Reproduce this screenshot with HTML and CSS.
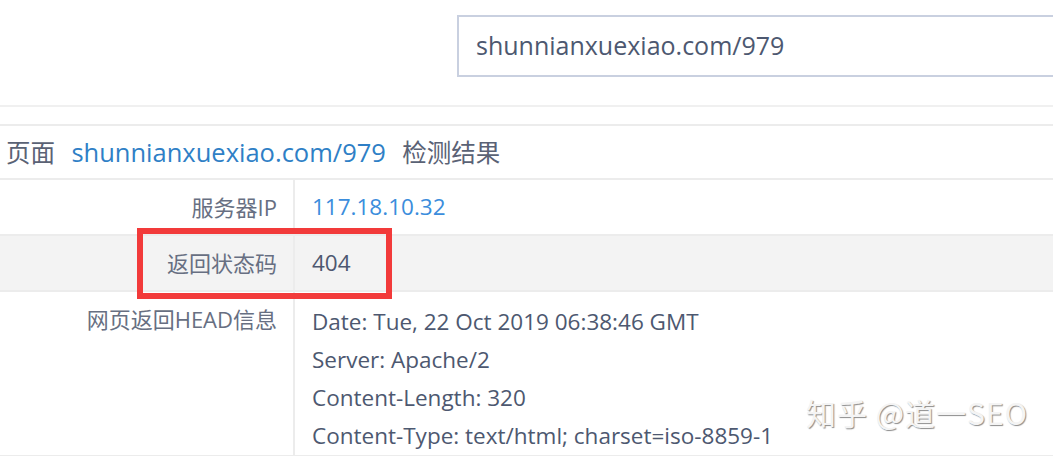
FILE: index.html
```html
<!DOCTYPE html>
<html lang="zh-CN">
<head>
    <meta charset="UTF-8">
    <title>页面检测结果</title>
    <link rel="stylesheet" href="styles.css">
</head>
<body>
    <div class="search-bar">
        <div class="search-input">shunnianxuexiao.com/979</div>
    </div>
    <div class="result">
        <div class="result-title">页面 <a class="link" href="#">shunnianxuexiao.com/979</a> 检测结果</div>
        <div class="row">
            <div class="label">服务器IP</div>
            <div class="value ip">117.18.10.32</div>
        </div>
        <div class="row gray">
            <div class="label">返回状态码</div>
            <div class="value">404</div>
            <div class="highlight"></div>
        </div>
        <div class="row">
            <div class="label">网页返回HEAD信息</div>
            <div class="value head">
                <div>Date: Tue, 22 Oct 2019 06:38:46 GMT</div>
                <div>Server: Apache/2</div>
                <div>Content-Length: 320</div>
                <div>Content-Type: text/html; charset=iso-8859-1</div>
            </div>
        </div>
    </div>
    <div class="watermark">知乎 @道一SEO</div>
</body>
</html>
```

FILE: styles.css
```css
* { box-sizing: border-box; }
body {
    margin: 0;
    background: #fff;
    font-family: 'Open Sans', 'Noto Sans CJK SC', sans-serif;
    color: #4d5870;
    overflow: hidden;
    height: 456px;
    position: relative;
}
.search-bar {
    height: 107px;
    padding: 15px 0 0 457px;
    border-bottom: 2px solid #f0f0f0;
}
.search-input {
    width: 640px;
    height: 62px;
    border: 2px solid #c9d0e0;
    padding: 0 0 0 17px;
    font-size: 25px;
    line-height: 56px;
    color: #4d5870;
}
.result {
    margin-top: 17px;
    border-top: 2px solid #ececec;
}
.result-title {
    height: 54px;
    line-height: 52px;
    font-size: 24.5px;
    padding-left: 6px;
    color: #5a6275;
    border-bottom: 2px solid #ececec;
    word-spacing: 10px;
}
.link {
    color: #2f7fc6;
    text-decoration: none;
    font-size: 25.5px;
    word-spacing: 0;
}
.row {
    display: grid;
    grid-template-columns: 295px 1fr;
    border-bottom: 2px solid #ececec;
    position: relative;
}
.row.gray { background: #f3f3f3; }
.label {
    text-align: right;
    padding: 0 16px 0 0;
    font-size: 22px;
    line-height: 54px;
    color: #676f82;
    border-right: 2px solid #ececec;
}
.value {
    padding-left: 17px;
    font-size: 22.5px;
    line-height: 54px;
    color: #4d5870;
}
.value.ip { color: #3b8ddc; }
.value.head {
    line-height: 38px;
    padding-top: 11px;
}
.highlight {
    position: absolute;
    left: 137px;
    top: -8px;
    width: 255px;
    height: 71px;
    border: 6px solid #f23a3a;
    z-index: 1;
}
.watermark {
    position: absolute;
    left: 806px;
    top: 390px;
    font-size: 30px;
    font-family: 'Noto Sans CJK SC', sans-serif;
    color: #f4f4f4;
    text-shadow: 1px 1px 1px #8c8c8c;
    letter-spacing: 1px;
}
```
